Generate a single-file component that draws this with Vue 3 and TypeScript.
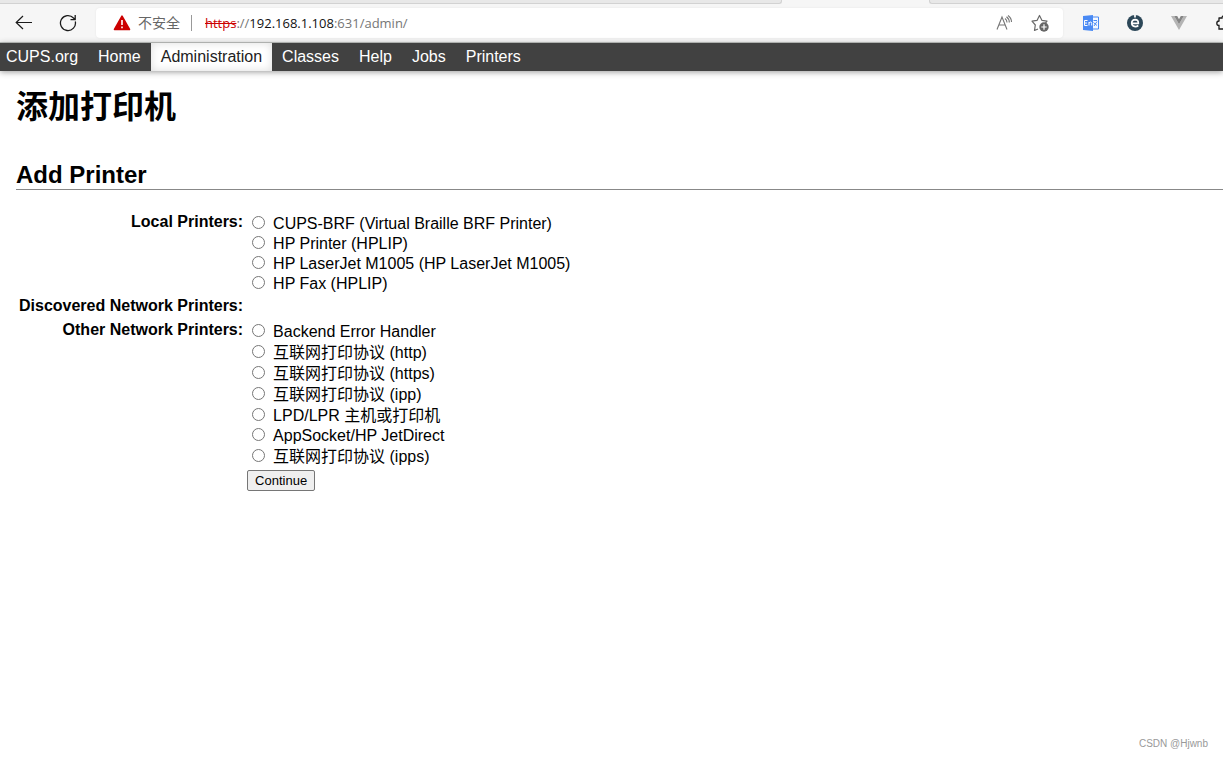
<script setup lang="ts">
interface Device {
  id: string
  label: string
  cjk?: boolean
}

const navItems: string[] = ['CUPS.org', 'Home', 'Administration', 'Classes', 'Help', 'Jobs', 'Printers']

const localPrinters: Device[] = [
  { id: 'cups-brf', label: 'CUPS-BRF (Virtual Braille BRF Printer)' },
  { id: 'hp', label: 'HP Printer (HPLIP)' },
  { id: 'hp-m1005', label: 'HP LaserJet M1005 (HP LaserJet M1005)' },
  { id: 'hpfax', label: 'HP Fax (HPLIP)' },
]

const otherPrinters: Device[] = [
  { id: 'beh', label: 'Backend Error Handler' },
  { id: 'http', label: '互联网打印协议 (http)', cjk: true },
  { id: 'https', label: '互联网打印协议 (https)', cjk: true },
  { id: 'ipp', label: '互联网打印协议 (ipp)', cjk: true },
  { id: 'lpd', label: 'LPD/LPR 主机或打印机', cjk: true },
  { id: 'socket', label: 'AppSocket/HP JetDirect' },
  { id: 'ipps', label: '互联网打印协议 (ipps)', cjk: true },
]
</script>

<template>
  <div class="window">
    <div class="tabs">
      <div class="tab tab-left"></div>
      <div class="tab-active"></div>
      <div class="tab tab-right"></div>
    </div>
    <div class="toolbar">
      <button class="tool back" type="button" aria-label="Back">
        <svg width="18" height="16" viewBox="0 0 18 16" fill="none" stroke="#1b1b1b" stroke-width="1.2">
          <path d="M17 7.500H1.500M8 1L1.200 7.500L8 14" />
        </svg>
      </button>
      <button class="tool reload" type="button" aria-label="Reload">
        <svg width="18" height="18" viewBox="0 0 18 18" fill="none" stroke="#1b1b1b" stroke-width="1.3">
          <path d="M16.300 7.500A7.500 7.500 0 1 1 14.500 4L16 5.500M16.200 1V5.700H11.500" />
        </svg>
      </button>
      <div class="address">
        <svg class="warn" width="18" height="16" viewBox="0 0 18 16">
          <path d="M9 1.200L16.500 14.500H1.500Z" fill="#c00" stroke="#c00" stroke-width="1.600" stroke-linejoin="round" />
          <path d="M9 5V10M9 11.500V13.200" stroke="#fff" stroke-width="1.600" />
        </svg>
        <span class="insecure">不安全</span>
        <span class="divider"></span>
        <span class="url"><s>https</s>://<b>192.168.1.108</b>:631/admin/</span>
        <button class="tool read" type="button" aria-label="Read aloud">
          <svg width="17" height="16" viewBox="0 0 17 16" fill="none" stroke="#767676" stroke-width="1.100">
            <path d="M1 14.500L6 2L11 14.500M2.800 10H9.200M9 3.500Q11 5 11 7.500M10.500 1.700Q13.400 4 13.300 7.500M12 .5Q15.500 3 15.500 7" />
          </svg>
        </button>
        <button class="tool favorite" type="button" aria-label="Add to favorites">
          <svg width="19" height="18" viewBox="0 0 19 18">
            <path d="M7 15L3.500 16.500L4.300 11L1 7.200L6 6.400L8.500 1.500L11 6.400L16 7.200L14.500 9" fill="none" stroke="#696969" stroke-width="1.200" stroke-linejoin="round" />
            <circle cx="13" cy="13" r="4.700" fill="#666" />
            <path d="M13 10.300V15.700M10.300 13H15.700" stroke="#fff" stroke-width="1.200" />
          </svg>
        </button>
      </div>
      <div class="extensions">
        <button class="tool" type="button" aria-label="Translate">
          <svg width="16" height="16" viewBox="0 0 16 16">
            <path d="M6 2H15.500V14H6Z" fill="#f4f8ff" stroke="#4a8af4" />
            <path d="M0 1L10 0V16L0 15Z" fill="#4a8af4" />
            <path d="M4.500 5.500H1.500V10.500H4.500M1.500 8H4M6 10.500V7M6 8Q8.500 5.800 8.700 8.300V10.500" fill="none" stroke="#fff" />
            <path d="M10.500 5.500H14M11 11L14 6.500M10.500 7.500L14 10.500" fill="none" stroke="#4a8af4" />
          </svg>
        </button>
        <button class="tool" type="button" aria-label="Extension">
          <svg width="16" height="16" viewBox="0 0 16 16">
            <circle cx="8" cy="8" r="8" fill="#2c4758" />
            <path d="M4.500 8.300H11.300Q11.500 4.800 8.200 4.700Q4.800 4.800 4.700 8.300Q4.900 11.500 8.200 11.600Q10 11.600 11.300 10.500M8 0V2.500" fill="none" stroke="#fff" stroke-width="1.700" />
          </svg>
        </button>
        <button class="tool" type="button" aria-label="Vue devtools">
          <svg width="16" height="14" viewBox="0 0 16 14">
            <path d="M0 0H3.200L8 8.300L12.800 0H16L8 14Z" fill="#b4b4b4" />
            <path d="M3.200 0H6.200L8 3.200L9.800 0H12.800L8 8.300Z" fill="#858585" />
          </svg>
        </button>
        <button class="tool" type="button" aria-label="Extensions">
          <svg width="16" height="16" viewBox="0 0 16 16" fill="none" stroke="#1b1b1b" stroke-width="1.300">
            <path d="M3.500 3H7Q7 .8 9 .8T11 3H15V14H4V10.500Q1.800 10.500 1.800 8.300T4 6V3" />
          </svg>
        </button>
      </div>
    </div>

    <nav class="nav">
      <a v-for="item in navItems" :key="item" href="#" :class="{ active: item === 'Administration' }">{{ item }}</a>
    </nav>

    <main>
      <h1>添加打印机</h1>
      <h2>Add Printer</h2>
      <form @submit.prevent>
        <table>
          <tbody>
            <tr>
              <th scope="row">Local Printers:</th>
              <td>
                <div v-for="d in localPrinters" :key="d.id" class="choice">
                  <input :id="d.id" type="radio" name="device" :value="d.id" /><label :for="d.id">{{ d.label }}</label>
                </div>
              </td>
            </tr>
            <tr class="empty">
              <th scope="row">Discovered Network Printers:</th>
              <td></td>
            </tr>
            <tr>
              <th scope="row">Other Network Printers:</th>
              <td>
                <div v-for="d in otherPrinters" :key="d.id" class="choice" :class="{ cjk: d.cjk }">
                  <input :id="d.id" type="radio" name="device" :value="d.id" /><label :for="d.id">{{ d.label }}</label>
                </div>
              </td>
            </tr>
            <tr>
              <td></td>
              <td><button class="continue" type="submit">Continue</button></td>
            </tr>
          </tbody>
        </table>
      </form>
    </main>
    <footer>CSDN @Hjwnb</footer>
  </div>
</template>

<style>
body {
  margin: 0;
  background: #fff;
}
</style>

<style scoped>
.window {
  display: flex;
  flex-direction: column;
  min-height: 100vh;
  overflow: hidden;
  color: #000;
  font: 16px/18px "Liberation Sans", "Noto Sans CJK SC", sans-serif;
}
.tabs {
  display: flex;
  height: 4px;
  background: #f6f6f6;
}
.tab {
  box-sizing: border-box;
  background: #e8e8e8;
  border-bottom: 1px solid #d2d2d2;
}
.tab-left {
  flex: 782;
  border-right: 1px solid #d2d2d2;
  border-bottom-right-radius: 3px;
}
.tab-active {
  flex: 148;
}
.tab-right {
  flex: 293;
  border-left: 1px solid #d2d2d2;
  border-bottom-left-radius: 3px;
}
.toolbar {
  display: flex;
  align-items: center;
  height: 38px;
  background: #f6f6f6;
  border-bottom: 1px solid #b8bcb9;
}
.tool {
  display: flex;
  flex: none;
  padding: 0;
  border: 0;
  background: none;
}
.back {
  margin-left: 15px;
}
.reload {
  margin: 0 19px 0 26px;
}
.address {
  display: flex;
  flex: 1;
  align-items: center;
  box-sizing: border-box;
  height: 30px;
  padding: 0 13px 0 17px;
  border-radius: 4px;
  background: #fff;
  box-shadow: 0 0 2px #e4e4e4;
  font: 14px/20px "Open Sans", "Noto Sans CJK SC", sans-serif;
  color: #767676;
}
.insecure {
  margin-left: 7px;
  color: #666;
}
.divider {
  width: 1px;
  height: 16px;
  margin: 0 13px 0 11px;
  background: #999;
}
.url {
  flex: 1;
  font-size: 13px;
  white-space: nowrap;
}
.url s {
  color: #c00;
}
.url b {
  font-weight: 400;
  color: #111;
}
.favorite {
  margin-left: 18px;
}
.extensions {
  display: flex;
  align-items: center;
  gap: 28px;
  margin: 0 -8px 0 20px;
}
.nav {
  display: flex;
  position: relative;
  background: #414141;
  box-shadow: 0 1px 6px #999;
}
.nav a {
  padding: 5px 10px;
  color: #fff;
  text-decoration: none;
}
.nav a:first-child {
  padding-left: 6px;
}
.nav a.active {
  color: #222;
  background: #fff;
  box-shadow: inset 0 0 8px #ddd;
}
main {
  flex: 1;
  padding-left: 16px;
}
h1 {
  margin: 14px 0 32px;
  font-size: 32px;
  line-height: 44px;
}
h2 {
  margin: 0 0 20px;
  border-bottom: 1px solid #888;
  font-size: 24px;
  line-height: 28px;
}
table {
  border-spacing: 2px;
}
th,
td {
  padding: 1px;
  vertical-align: top;
  text-align: left;
}
th {
  text-align: right;
  white-space: nowrap;
}
.empty {
  height: 22px;
}
.choice {
  display: flex;
  align-items: flex-start;
  height: 20px;
}
.choice label {
  padding-top: 2px;
}
.choice input {
  width: 13px;
  height: 13px;
  margin: 3px 8px 0 5px;
}
.choice.cjk {
  height: 21px;
}
.choice.cjk label {
  padding-top: 3px;
}
.choice.cjk input {
  margin-top: 4px;
}
.continue {
  display: block;
  box-sizing: border-box;
  height: 21px;
  padding: 0 7px;
  border: 1px solid #767676;
  border-radius: 2px;
  background: #efefef;
  color: #000;
  font: 13px/18px "Liberation Sans", sans-serif;
}
footer {
  padding: 0 15px 7px;
  color: #999;
  font: 10px/14px "Liberation Sans", sans-serif;
  text-align: right;
}
</style>
